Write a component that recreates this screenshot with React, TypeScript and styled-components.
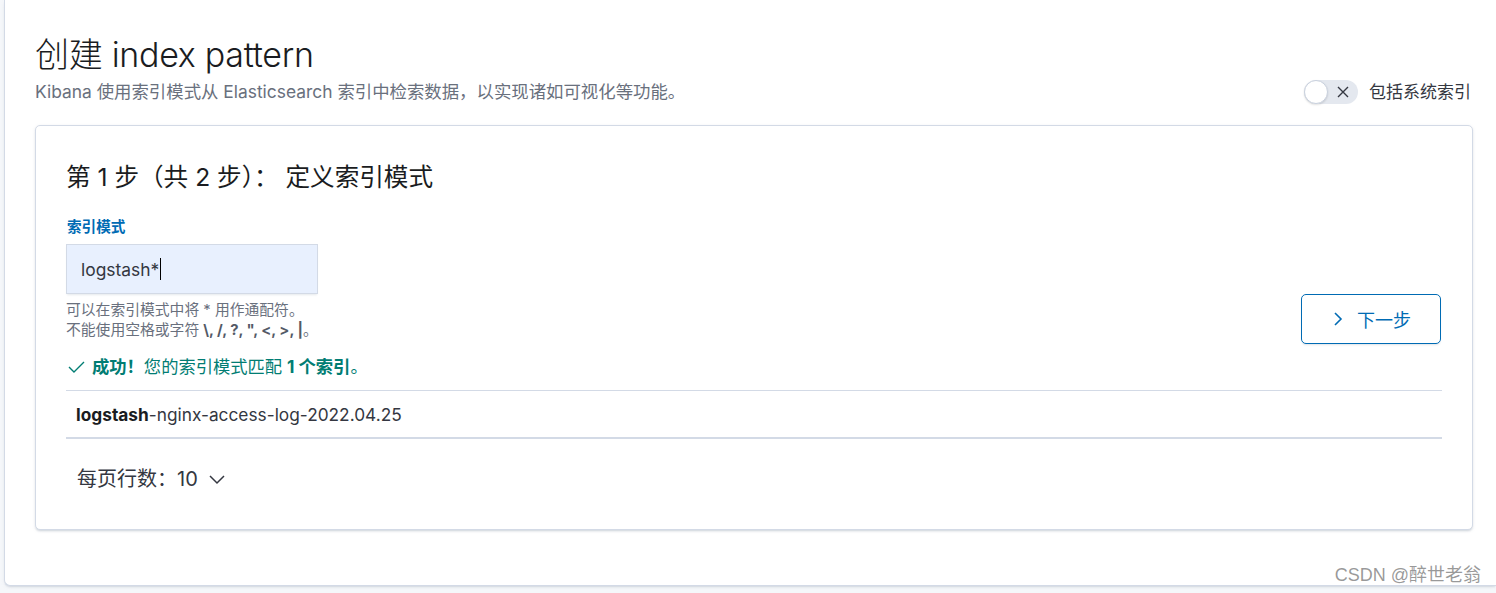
import React from "react";
import styled, { createGlobalStyle } from "styled-components";

const GlobalStyle = createGlobalStyle`
  html, body { margin: 0; padding: 0; background: #f5f7fa; }
  body { font-family: Inter, "Noto Sans CJK SC", "Noto Sans", sans-serif; color: #343741; }
  * { box-sizing: border-box; }
`;

const Page = styled.div`
  position: relative;
  width: 1496px;
  height: 593px;
  overflow: hidden;
  padding: 0 0 7px 4px;
`;

const Panel = styled.div`
  height: 586px;
  background: #fff;
  border-left: 1px solid #d3dae6;
  border-bottom: 1px solid #d3dae6;
  border-bottom-left-radius: 6px;
  box-shadow: 0 2px 2px -1px rgba(152, 162, 179, 0.3), 0 1px 5px -2px rgba(152, 162, 179, 0.3);
  padding: 35px 23px 0 30px;
`;

const Header = styled.div`
  display: flex;
  justify-content: space-between;
  align-items: flex-end;
`;

const HeaderText = styled.div`
  display: flex;
  flex-direction: column;
  gap: 5px;
`;

const Title = styled.h1`
  margin: 0;
  font-size: 34px;
  line-height: 40px;
  font-weight: 300;
  color: #1a1c21;
  letter-spacing: -0.3px;
`;

const Subtitle = styled.p`
  margin: 0;
  font-size: 17.4px;
  line-height: 24px;
  color: #69707d;
`;

const ToggleGroup = styled.label`
  display: flex;
  align-items: center;
  gap: 11px;
  font-size: 17px;
  line-height: 24px;
  color: #343741;
  margin-right: 2px;
`;

const Track = styled.span`
  position: relative;
  display: inline-flex;
  align-items: center;
  justify-content: flex-end;
  width: 54px;
  height: 24px;
  border-radius: 12px;
  background: #e4e8ef;
  padding-right: 8px;
  color: #343741;
`;

const Knob = styled.span`
  position: absolute;
  left: 0;
  top: 0;
  width: 24px;
  height: 24px;
  border-radius: 50%;
  background: #fff;
  border: 1px solid #c9d1de;
  box-shadow: 0 1px 2px rgba(0, 0, 0, 0.12);
`;

const Card = styled.div`
  margin-top: 21px;
  background: #fff;
  border: 1px solid #d3dae6;
  border-radius: 5px;
  box-shadow: 0 1px 3px rgba(152, 162, 179, 0.25), 0 2px 2px -1px rgba(152, 162, 179, 0.3);
  padding: 35px 30px 37px 30px;
  height: 405px;
`;

const StepTitle = styled.h2`
  margin: 0;
  font-size: 24.6px;
  line-height: 32px;
  font-weight: 400;
  color: #1a1c21;
`;

const FormRow = styled.div`
  margin-top: 25px;
  display: flex;
  justify-content: space-between;
  align-items: flex-end;
`;

const FieldColumn = styled.div`
  display: flex;
  flex-direction: column;
`;

const Label = styled.div`
  font-size: 14.6px;
  line-height: 18px;
  font-weight: 700;
  color: #006bb4;
  margin-left: 1px;
`;

const Input = styled.div`
  margin-top: 8px;
  width: 252px;
  height: 50px;
  background: #e8f0fe;
  border: 1px solid #d3dae6;
  box-shadow: 0 2px 2px -1px rgba(152, 162, 179, 0.25);
  display: flex;
  align-items: center;
  padding-left: 14px;
  font-size: 17.4px;
  color: #343741;
`;

const Caret = styled.span`
  display: inline-block;
  width: 1px;
  height: 22px;
  background: #000;
  margin-left: 1px;
`;

const Help = styled.div`
  margin-top: 6px;
  font-size: 14.8px;
  line-height: 20px;
  color: #69707d;
  padding-bottom: 3px;
  b { color: #535966; font-weight: 700; }
`;

const NextButton = styled.button`
  width: 140px;
  height: 50px;
  margin: 0 1px -1px 0;
  border: 1px solid #006bb4;
  border-radius: 5px;
  background: #fff;
  color: #006bb4;
  font-family: inherit;
  font-size: 18px;
  display: flex;
  align-items: center;
  justify-content: center;
  gap: 14px;
  box-shadow: 0 2px 2px -1px rgba(152, 162, 179, 0.3);
  padding: 0 0 0 2px;
`;

const Success = styled.div`
  margin-top: 12px;
  display: flex;
  align-items: center;
  gap: 7px;
  font-size: 17.3px;
  line-height: 24px;
  color: #017d73;
  padding-left: 2px;
  b { font-weight: 700; }
`;

const Table = styled.div`
  margin-top: 11px;
  border-top: 1px solid #d3dae6;
  border-bottom: 2px solid #d3dae6;
`;

const Row = styled.div`
  height: 46px;
  display: flex;
  align-items: center;
  padding-left: 10px;
  font-size: 17.3px;
  color: #343741;
  b { color: #1a1c21; font-weight: 700; }
`;

const PerPage = styled.div`
  margin-top: 28px;
  padding-left: 11px;
  display: flex;
  align-items: center;
  gap: 10px;
  font-size: 20px;
  line-height: 24px;
  color: #343741;
`;

const Watermark = styled.div`
  position: absolute;
  right: 15px;
  bottom: 7px;
  font-family: "Liberation Sans", "Noto Sans CJK SC", sans-serif;
  font-size: 18px;
  color: rgba(120, 120, 120, 0.75);
  text-shadow: 0 0 1px rgba(255, 255, 255, 0.8);
`;

const Icon = styled.svg`
  display: block;
  flex: none;
`;

export default function App() {
  return (
    <>
      <GlobalStyle />
      <Page>
        <Panel>
          <Header>
            <HeaderText>
              <Title>创建 index pattern</Title>
              <Subtitle>Kibana 使用索引模式从 Elasticsearch 索引中检索数据，以实现诸如可视化等功能。</Subtitle>
            </HeaderText>
            <ToggleGroup>
              <Track>
                <Knob />
                <Icon width="14" height="14" viewBox="0 0 14 14">
                  <path d="M2 2 L12 12 M12 2 L2 12" stroke="#343741" strokeWidth="1.4" fill="none" />
                </Icon>
              </Track>
              包括系统索引
            </ToggleGroup>
          </Header>
          <Card>
            <StepTitle>第 1 步（共 2 步）： 定义索引模式</StepTitle>
            <FormRow>
              <FieldColumn>
                <Label>索引模式</Label>
                <Input>
                  logstash*
                  <Caret />
                </Input>
                <Help>
                  可以在索引模式中将 * 用作通配符。
                  <br />
                  不能使用空格或字符 <b>\, /, ?, ", &lt;, &gt;, |</b>。
                </Help>
              </FieldColumn>
              <NextButton>
                <Icon width="10" height="16" viewBox="0 0 10 16">
                  <path d="M2 2 L8 8 L2 14" stroke="#006bb4" strokeWidth="1.6" fill="none" />
                </Icon>
                下一步
              </NextButton>
            </FormRow>
            <Success>
              <Icon width="17" height="12" viewBox="0 0 17 12">
                <path d="M1 6 L6 11 L16 1" stroke="#017d73" strokeWidth="1.4" fill="none" />
              </Icon>
              <span>
                <b>成功！</b>您的索引模式匹配 <b>1 个索引</b>。
              </span>
            </Success>
            <Table>
              <Row>
                <span>
                  <b>logstash</b>-nginx-access-log-2022.04.25
                </span>
              </Row>
            </Table>
            <PerPage>
              <span>每页行数：10</span>
              <Icon width="18" height="12" viewBox="0 0 18 12">
                <path d="M2 3 L9 10 L16 3" stroke="#343741" strokeWidth="1.5" fill="none" />
              </Icon>
            </PerPage>
          </Card>
        </Panel>
        <Watermark>CSDN @醉世老翁</Watermark>
      </Page>
    </>
  );
}
